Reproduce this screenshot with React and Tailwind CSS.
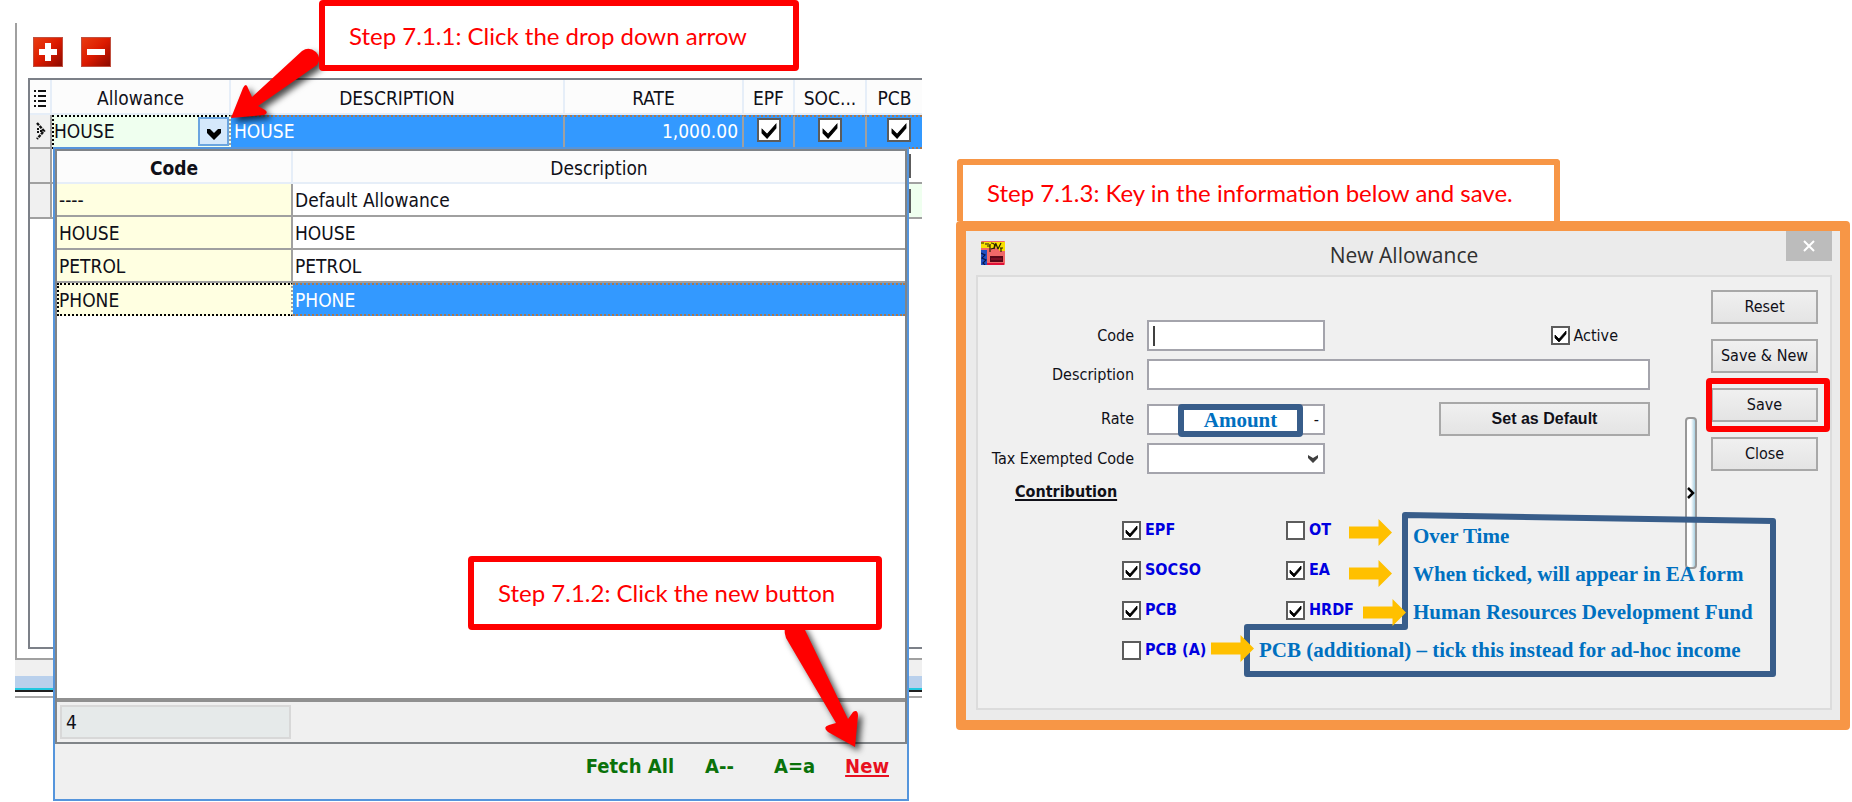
import React from "react";

const CHECK = "M4 9 L8 13 L15 5 L15 8 L8 16 L4 12 Z";

function Tick({ id, checked, size, ariaLabel }) {
  const big = size === "lg";
  return (
    <span className={big ? "inline-grid h-6 w-6 shrink-0" : "inline-grid h-[19px] w-[19px] shrink-0"}>
      <input
        id={id}
        type="checkbox"
        aria-label={ariaLabel}
        defaultChecked={checked}
        className="peer col-start-1 row-start-1 h-full w-full appearance-none border-2 border-[#5c5c5c] bg-white"
      />
      <svg
        viewBox="0 0 19 19"
        className="pointer-events-none invisible col-start-1 row-start-1 h-full w-full peer-checked:visible"
      >
        <path d={CHECK} fill="#000" stroke="#000" strokeWidth="0.8" />
      </svg>
    </span>
  );
}

function ToolButton({ label, minus }) {
  return (
    <button
      aria-label={label}
      className="h-[30px] w-[30px] border border-[#c05040] bg-linear-to-br from-[#ea3a10] via-[#dc1a00] to-[#8c0a00]"
    >
      <svg viewBox="0 0 28 28" className="h-full w-full">
        {minus ? (
          <rect x="5" y="11" width="18" height="6" fill="#fff" />
        ) : (
          <path d="M11 5h6v6h6v6h-6v6h-6v-6H5v-6h6z" fill="#fff" />
        )}
      </svg>
    </button>
  );
}

function Callout({ className, children }) {
  return (
    <div
      className={
        "flex items-center rounded-sm border-6 bg-white px-6 font-[Lato,sans-serif] text-[24px] leading-7 whitespace-nowrap text-[#ff0000] " +
        className
      }
    >
      {children}
    </div>
  );
}

function AllowanceGrid() {
  const th = "border-r-2 border-b-2 border-[#e6eef8] bg-[#fcfcfc] px-0 pt-0.5 pb-0 text-center font-normal";
  const sel = "border-t-2 border-t-[#a87850] [border-top-style:dotted] border-r-2 border-r-[#a0a0a0] bg-[#3399ff] p-0 align-top text-white";
  const cell = "border-r-2 border-b-2 border-[#a0a0a0] p-0";
  const edge = "border-r-2 border-b-2 border-[#a0a0a0] bg-[#f0f0f0] p-0";
  return (
    <table className="w-full table-fixed border-separate border-spacing-0 text-[19px] leading-7 text-[#101018]">
      <colgroup>
        <col className="w-[22px]" />
        <col className="w-[179px]" />
        <col />
        <col className="w-[179px]" />
        <col className="w-[51px]" />
        <col className="w-[72px]" />
        <col className="w-[55px]" />
      </colgroup>
      <thead>
        <tr className="h-[35px]">
          <th className={th}>
            <svg viewBox="0 0 12 18" className="mx-auto h-[18px] w-3">
              <path d="M0 2h2M4 2h8M0 7h2M4 7h8M0 12h2M4 12h8M0 17h2M4 17h8" stroke="#111" strokeWidth="2.2" />
            </svg>
          </th>
          <th className={th}>Allowance</th>
          <th className={th}>DESCRIPTION</th>
          <th className={th}>RATE</th>
          <th className={th}>EPF</th>
          <th className={th}>SOC...</th>
          <th className="border-b-2 border-[#e6eef8] bg-[#fcfcfc] px-0 pt-0.5 pb-0 text-center font-normal">PCB</th>
        </tr>
      </thead>
      <tbody>
        <tr className="h-[34px]">
          <td className={edge}>
            <svg viewBox="0 0 12 18" className="mx-auto h-[18px] w-3">
              <path d="M3 1 L10 9 L3 17" fill="none" stroke="#111" strokeWidth="2.4" strokeDasharray="3 1" />
              <path d="M4 6v6M6 9h2" fill="none" stroke="#111" strokeWidth="2" strokeDasharray="2 1" />
            </svg>
          </td>
          <td className="border-t-2 border-r-2 border-l-2 border-dotted border-t-black border-r-[#a0a0a0] border-l-black bg-[#efffef] p-0 align-top">
            <div className="flex items-start justify-between">
              <span>HOUSE</span>
              <button
                aria-label="Open allowance list"
                className="flex h-[29px] w-[31px] items-center justify-center border-2 border-[#6aa5e0] bg-[#d5e8fb]"
              >
                <svg viewBox="0 0 16 14" className="mt-1 h-[14px] w-4">
                  <path d="M1 2 L4 2 L8 6 L12 2 L15 2 V6 L8 13 L1 6 Z" fill="#000" />
                </svg>
              </button>
            </div>
          </td>
          <td className={sel + " pl-[3px]"}>HOUSE</td>
          <td className={sel + " pr-1 text-right"}>1,000.00</td>
          <td className={sel}>
            <span className="flex justify-center pt-px"><Tick size="lg" checked ariaLabel="EPF" /></span>
          </td>
          <td className={sel}>
            <span className="flex justify-center pt-px"><Tick size="lg" checked ariaLabel="SOCSO" /></span>
          </td>
          <td className="border-y-2 border-dotted border-[#a87850] bg-[#3399ff] p-0 align-top">
            <span className="flex justify-end pt-px pr-[11px]"><Tick size="lg" checked ariaLabel="PCB" /></span>
          </td>
        </tr>
        {["", "bg-[#efffef] "].map((bg, i) => (
          <tr key={i} className="h-[35px]">
            <td className={edge} />
            <td className={cell} />
            <td className={cell} />
            <td className={cell} />
            <td className={cell} />
            <td className={cell} />
            <td className={bg + "border-b-2 border-[#a0a0a0] p-0"}>
              <span className="flex justify-end pr-[11px]"><Tick size="lg" ariaLabel="PCB" /></span>
            </td>
          </tr>
        ))}
      </tbody>
    </table>
  );
}

const CODES = [
  ["----", "Default Allowance"],
  ["HOUSE", "HOUSE"],
  ["PETROL", "PETROL"],
];

function LookupPopup() {
  return (
    <div className="absolute top-[147px] right-[13px] left-[53px] border-2 border-[#5595dc] bg-[#f0f0f0]">
      <div className="border-2 border-[#808488] bg-white">
        <table className="w-full table-fixed border-separate border-spacing-0 text-[19px] leading-6 text-[#101018]">
          <colgroup>
            <col className="w-[236px]" />
            <col />
          </colgroup>
          <thead>
            <tr className="h-[33px]">
              <th className="border-r-2 border-b-2 border-[#e6eef8] bg-[#fcfcfc] px-0 pt-0.5 pb-0 font-bold">Code</th>
              <th className="border-b-2 border-[#e6eef8] bg-[#fcfcfc] px-0 pt-0.5 pb-0 font-normal">Description</th>
            </tr>
          </thead>
          <tbody>
            {CODES.map(([code, description]) => (
              <tr key={code} className="h-[33px]">
                <td className="border-r-2 border-b-2 border-[#a0a0a0] bg-[#ffffe1] py-0 pr-0 pl-0.5">{code}</td>
                <td className="border-b-2 border-[#a0a0a0] py-0 pr-0 pl-0.5">{description}</td>
              </tr>
            ))}
            <tr className="h-[33px]">
              <td className="border-2 border-dotted border-y-black border-r-[#a0a0a0] border-l-black bg-[#ffffe1] p-0">
                PHONE
              </td>
              <td className="border-y-2 border-dotted border-[#a87850] bg-[#3399ff] py-0 pr-0 pl-0.5 text-white">PHONE</td>
            </tr>
          </tbody>
        </table>
        <div className="mt-[382px] border-t-4 border-[#909090] bg-[#f0f0f0] p-[3px]">
          <div className="h-[34px] w-[231px] border-2 border-[#d8d8d8] bg-[#e6eaea] pl-1 text-[19px] leading-[30px] text-[#101018]">
            4
          </div>
        </div>
      </div>
      <div className="flex h-[55px] items-start justify-end pt-2 pr-[18px] text-[20px] leading-7 font-bold text-[#0a720a]">
        <button className="mr-[31px] font-bold">Fetch All</button>
        <button className="mr-10 font-bold">A--</button>
        <button className="mr-[30px] font-bold">A=a</button>
        <button className="font-bold text-[#e81020] underline decoration-2 underline-offset-2">New</button>
      </div>
    </div>
  );
}

function RedArrows() {
  return (
    <svg
      width="922"
      height="802"
      viewBox="0 0 922 802"
      className="pointer-events-none absolute top-0 left-0 drop-shadow-[4px_4px_3px_rgba(0,0,0,0.7)]"
    >
      <path
        d="M231 118 L243 88 Q246 82 248 88 L252 97 L302 51 Q309 46 316 52 Q322 58 317 65 L258 106 L265 110 Q269 113 264 115 Z"
        fill="#ff0000"
      />
      <path
        d="M855 747 L828 732 Q822 727 829 725 L836 723 L786 638 Q782 628 790 624 Q800 620 805 630 L848 719 L853 712 Q858 709 858 716 Z"
        fill="#ff0000"
      />
    </svg>
  );
}

function LeftPanel() {
  return (
    <section className="relative pt-[23px] pl-[15px]">
      <div className="border-b-2 border-l-2 border-[#a0a0a0] pt-[14px] pb-[9px] pl-[11px]">
        <div className="flex gap-[18px] pb-[11px] pl-[5px]">
          <ToolButton label="Add row" />
          <ToolButton label="Delete row" minus />
        </div>
        <div className="h-[571px] border-y-2 border-l-2 border-[#7c8088]">
          <AllowanceGrid />
        </div>
      </div>
      <div className="h-4 bg-[#f0f0f0]" />
      <div className="h-3 bg-[#b9d0ec]" />
      <div className="h-1 border-b-2 border-[#202020] bg-[#20c8e0]" />
      <div className="mt-1 h-0.5 bg-[#a8a8a8]" />
      <LookupPopup />
      <RedArrows />
      <Callout className="absolute top-0 left-[319px] h-[71px] w-[480px] border-[#ff0000]">
        Step 7.1.1: Click the drop down arrow
      </Callout>
      <Callout className="absolute top-[556px] left-[468px] h-[74px] w-[414px] border-[#ff0000]">
        Step 7.1.2: Click the new button
      </Callout>
    </section>
  );
}

function AppIcon() {
  return (
    <svg viewBox="0 0 24 24" className="h-6 w-6">
      <rect width="24" height="24" rx="1" fill="#f06868" />
      <path d="M0 1h24v9h-5l-3-3H0z" fill="#f8e000" />
      <rect y="9" width="6" height="15" fill="#2050c0" />
      <path d="M4 3h4M6 5h3v4M9 3v8M10 2q5 0 3 5l-3 1M15 2l-2 6M15 3l2 5M20 2l-3 6M19 7h3M20 7v4M0 2h3" fill="none" stroke="#282000" strokeWidth="1.2" />
      <path d="M0 12l4 2-3 3 4 2-3 3 2 2" fill="none" stroke="#081850" strokeWidth="1.2" />
      <rect x="9" y="15" width="13" height="6" fill="#580818" />
      <path d="M10 18h11" stroke="#a01830" strokeWidth="1" />
      <path d="M6 23h17" stroke="#e01038" strokeWidth="2" />
    </svg>
  );
}

function YellowArrow({ className }) {
  return (
    <svg viewBox="0 0 43 27" className={"pointer-events-none absolute h-[27px] w-[43px] " + className}>
      <path d="M0 7.500h29.500V0L43 13.500 29.500 27v-7.500H0z" fill="#ffc000" />
    </svg>
  );
}

function CheckField({ id, label, checked }) {
  return (
    <div className="flex h-10 items-center gap-1">
      <Tick id={id} checked={checked} />
      <label htmlFor={id} className="font-bold text-[#0000e0]">{label}</label>
    </div>
  );
}

const FIELD = "h-[31px] border-2 border-[#a4a4ac] bg-white px-1 outline-none";
const LABEL = "w-[156px] shrink-0 text-right";
const BUTTON = "border-2 border-[#a8a8a8] bg-linear-to-b from-[#f0f0f0] to-[#e4e4e4] text-center";

function AllowanceForm() {
  return (
    <form className="flex-1 pt-[43px]">
      <div className="flex items-center gap-[13px]">
        <label htmlFor="code" className={LABEL}>Code</label>
        <div className={FIELD + " flex w-[178px] items-center"}>
          <span className="h-5 w-0.5 shrink-0 bg-[#404040]" />
          <input id="code" className="w-full outline-none" />
        </div>
        <span className="ml-auto flex items-center gap-1 pr-8">
          <Tick id="active" checked />
          <label htmlFor="active">Active</label>
        </span>
      </div>
      <div className="mt-2 flex items-center gap-[13px]">
        <label htmlFor="description" className={LABEL}>Description</label>
        <input id="description" className={FIELD + " min-w-0 flex-1"} />
      </div>
      <div className="mt-3 flex h-[34px] items-center gap-[13px]">
        <label htmlFor="rate" className={LABEL}>Rate</label>
        <div className="relative">
          <input id="rate" defaultValue="-" className={FIELD + " w-[178px] text-right"} />
          <div className="absolute top-0 left-[31px] flex h-[33px] w-[125px] items-center justify-center rounded-sm border-6 border-[#385d8a] bg-white font-['Liberation_Serif',serif] text-[21px] leading-5 font-bold text-[#0070c0]">
            Amount
          </div>
        </div>
        <button type="button" className={BUTTON + " ml-auto h-[34px] w-[211px] font-[Liberation_Sans,sans-serif] font-bold"}>
          Set as Default
        </button>
      </div>
      <div className="mt-[7px] flex items-center gap-[13px]">
        <label htmlFor="tax" className={LABEL}>Tax Exempted Code</label>
        <div className="grid w-[178px]">
          <select id="tax" className={FIELD + " col-start-1 row-start-1 w-full appearance-none"} />
          <svg viewBox="0 0 12 10" className="pointer-events-none col-start-1 row-start-1 mr-[6px] h-[10px] w-3 self-center justify-self-end">
            <path d="M1 1 L6 4 L11 1 V4 L6 9 L1 4 Z" fill="#404040" />
          </svg>
        </div>
      </div>
      <h2 className="mt-2 pl-[37px] leading-5 font-bold underline decoration-2 underline-offset-2">Contribution</h2>
      <div className="mt-2 grid grid-cols-[164px_1fr] pl-[144px]">
        <CheckField id="epf" label="EPF" checked />
        <CheckField id="ot" label="OT" />
        <CheckField id="socso" label="SOCSO" checked />
        <CheckField id="ea" label="EA" checked />
        <CheckField id="pcb" label="PCB" checked />
        <CheckField id="hrdf" label="HRDF" checked />
        <CheckField id="pcba" label="PCB (A)" />
      </div>
    </form>
  );
}

function Notes() {
  return (
    <div className="pointer-events-none font-['Liberation_Serif',serif] text-[21px] leading-6 font-bold whitespace-nowrap text-[#0070c0]">
      <svg width="532" height="166" viewBox="0 0 532 166" className="absolute top-[234px] left-[266px]">
        <path
          d="M161 4 L529 10 L529 163 L3 163 L3 116 L161 116 Z"
          fill="none"
          stroke="#385d8a"
          strokeWidth="6"
          strokeLinejoin="round"
        />
      </svg>
      <YellowArrow className="top-[242px] left-[371px]" />
      <YellowArrow className="top-[283px] left-[371px]" />
      <YellowArrow className="top-[322px] left-[385px]" />
      <YellowArrow className="top-[358px] left-[233px]" />
      <div className="absolute top-[247px] left-[435px] flex flex-col gap-[14px]">
        <p>Over Time</p>
        <p>When ticked, will appear in EA form</p>
        <p>Human Resources Development Fund</p>
      </div>
      <p className="absolute top-[361px] left-[281px]">PCB (additional) – tick this instead for ad-hoc income</p>
    </div>
  );
}

function Dialog() {
  return (
    <div className="rounded-sm border-10 border-[#f79646] bg-[#ebebeb] pr-2 pb-[10px] pl-[10px]">
      <header className="grid h-11 grid-cols-[1fr_auto_1fr] items-start">
        <span className="pt-[10px] pl-[5px]"><AppIcon /></span>
        <h1 className="pt-2 font-['Open_Sans',sans-serif] text-[21px] leading-8 text-[#303030]">New Allowance</h1>
        <button aria-label="Close" className="flex h-[30px] w-[46px] items-center justify-center justify-self-end bg-[#bcbcbc]">
          <svg viewBox="0 0 12 12" className="h-3 w-3">
            <path d="M1 1l10 10M11 1L1 11" stroke="#fff" strokeWidth="2" />
          </svg>
        </button>
      </header>
      <div className="relative flex h-[435px] border-2 border-[#dcdcdc] bg-[#f0f0f0] pr-3 text-[16px] leading-5 text-[#101018]">
        <AllowanceForm />
        <div className="mt-[140px] mr-[14px] ml-[35px] flex h-[152px] w-3 items-center justify-center rounded-[4px] border-2 border-[#989898] bg-linear-to-r from-white via-white to-[#a8cfe0]">
          <svg viewBox="0 0 8 12" className="h-3 w-2 shrink-0">
            <path d="M1 1l5 5-5 5" fill="none" stroke="#000" strokeWidth="2.500" />
          </svg>
        </div>
        <div className="flex w-[107px] flex-col gap-[15px] pt-[13px]">
          <button className={BUTTON + " h-[34px]"}>Reset</button>
          <button className={BUTTON + " h-[34px]"}>Save &amp; New</button>
          <button className={BUTTON + " relative h-[34px]"}>
            Save
            <span className="absolute -top-3 -right-[14px] -bottom-3 -left-[7px] rounded-sm border-6 border-[#ff0000]" />
          </button>
          <button className={BUTTON + " h-[34px]"}>Close</button>
        </div>
        <Notes />
      </div>
    </div>
  );
}

export default function App() {
  return (
    <main className="grid min-h-screen grid-cols-[922fr_930fr] items-start bg-white font-['DejaVu_Sans_Condensed','DejaVu_Sans',sans-serif]">
      <LeftPanel />
      <section className="pt-[159px] pr-0.5 pl-[34px]">
        <Callout className="ml-px h-[62px] w-[603px] rounded-b-none border-b-0 border-[#f79646]">
          Step 7.1.3: Key in the information below and save.
        </Callout>
        <Dialog />
      </section>
    </main>
  );
}
